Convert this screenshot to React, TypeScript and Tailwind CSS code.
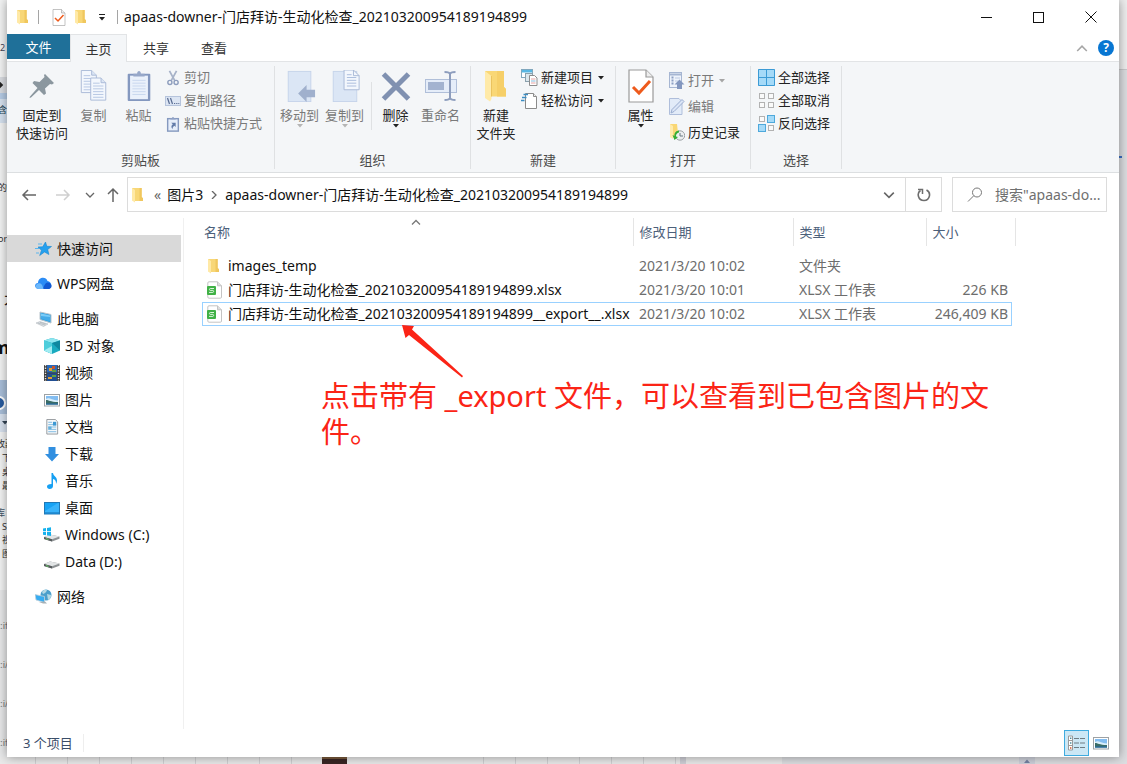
import React from "react";

type IconProps = { className?: string };

function Folder({ className = "h-4 w-4" }: IconProps) {
  return (
    <svg viewBox="0 0 16 16" className={className} aria-hidden="true">
      <path d="M2 1h9.500v10.500H13v2.500H4L2 13z" fill="#f8d777" />
      <path d="M9.500 1h2.200v9l1.300 1v3H9.500z" fill="#f0c75e" />
      <path d="M2 1l3 2v12.600L2 13.500z" fill="#ffe9a6" />
    </svg>
  );
}

function BigFolder() {
  return (
    <svg viewBox="0 0 32 32" className="h-8 w-8" aria-hidden="true">
      <path d="M5 1h19v16l2 2v7.500H10L5 28z" fill="#f9d775" />
      <path d="M17 1h7v16l2 2v7.500h-9z" fill="#f6cf68" />
      <path d="M5 1l6.500 5v23l-1.500 2.500L5 28z" fill="#ffeaa8" />
      <path d="M11.500 26.500V6" stroke="#e6bb52" strokeWidth="0.800" />
    </svg>
  );
}

function CheckedPage({ className = "h-4 w-4" }: IconProps) {
  return (
    <svg viewBox="0 0 26 34" className={className} aria-hidden="true">
      <path d="M1 1h17l7 7v25H1z" fill="#fff" stroke="#9a9a9a" strokeWidth="1.200" />
      <path d="M18 1v7h7" fill="#eee" stroke="#9a9a9a" strokeWidth="1.200" />
      <path d="M5 18l6 6 11-12" fill="none" stroke="#ee5a1c" strokeWidth="3" />
    </svg>
  );
}

function Pin() {
  return (
    <svg viewBox="0 0 32 32" className="h-8 w-8" aria-hidden="true">
      <path d="M19 4l9 9-2 1.500-2-.500-5 4.500 1 5-2 1.500-5-5-8 7.500-1.500.5.500-1.500L11.500 18l-5-5 1.500-2 5.500 1 5-5-.5-2z" fill="#8b979f" />
    </svg>
  );
}

function PageLines({ x, y }: { x: number; y: number }) {
  return (
    <g transform={`translate(${x} ${y})`}>
      <path d="M.5.500h11l5 5v18.500H.5z" fill="#f3f7fd" stroke="#a9b9d6" />
      <path d="M11.500.500v5h5" fill="#dbe5f4" stroke="#a9b9d6" />
      <path d="M3 6h7M3 9h11M3 12h11M3 15h11M3 18h11M3 21h11" stroke="#b4c5e2" />
    </g>
  );
}

function CopyPages() {
  return (
    <svg viewBox="0 0 32 34" className="h-8 w-8" aria-hidden="true">
      <PageLines x={2} y={0} />
      <PageLines x={12} y={8} />
    </svg>
  );
}

function Clipboard() {
  return (
    <svg viewBox="0 0 32 34" className="h-8 w-8" aria-hidden="true">
      <rect x="4" y="4" width="24" height="29" rx="1" fill="#8498bf" />
      <rect x="6.500" y="6" width="19" height="25" fill="#eaf1fb" />
      <path d="M10 7V4h4c0-4 4-4 4 0h4v3z" fill="#97a8c9" />
      <path d="M9 11h14M9 14h14M9 17h14M9 20h14M9 23h14M9 26h14" stroke="#c7d6ee" />
    </svg>
  );
}

function Scissors() {
  return (
    <svg viewBox="0 0 16 18" className="h-4 w-4" aria-hidden="true">
      <path d="M4 1l6 11M12 1L6 12" stroke="#a7b2c8" strokeWidth="2" fill="none" />
      <circle cx="4.500" cy="14" r="2.300" fill="none" stroke="#8d9dbd" strokeWidth="1.600" />
      <circle cx="11.500" cy="14" r="2.300" fill="none" stroke="#8d9dbd" strokeWidth="1.600" />
    </svg>
  );
}

function PathBox() {
  return (
    <svg viewBox="0 0 16 16" className="h-4 w-4" aria-hidden="true">
      <rect x="0.500" y="3.500" width="15" height="9" fill="#dce5f3" stroke="#b6c4dc" />
      <path d="M2.500 5l2 6M5.500 5l2 6" stroke="#596c92" strokeWidth="1.200" />
      <path d="M9 10.500h1.200M11.200 10.500h1.200M13.300 10.500h1" stroke="#596c92" />
    </svg>
  );
}

function ShortcutClipboard() {
  return (
    <svg viewBox="0 0 16 18" className="h-4 w-4" aria-hidden="true">
      <rect x="2" y="3" width="12" height="14" fill="#e6eefa" stroke="#8599bf" strokeWidth="1.600" />
      <path d="M5 4V2.500h2c0-2 2-2 2 0h2V4z" fill="#8fa1c5" />
      <path d="M6 7.500h5v5L9.500 11c-1.500 1-2 2-2 4-2-2.500-1.500-4.500.3-5.700z" fill="#637ca9" />
    </svg>
  );
}

function MoveTo() {
  return (
    <svg viewBox="0 0 32 34" className="h-8 w-8" aria-hidden="true">
      <rect x="3.500" y="1.500" width="24" height="32" fill="#dbe6f5" stroke="#c6d4ea" />
      <path d="M14 25l9-9v5h9v8h-9v5z" fill="#a0b0cd" />
    </svg>
  );
}

function CopyTo() {
  return (
    <svg viewBox="0 0 32 34" className="h-8 w-8" aria-hidden="true">
      <rect x="3.500" y="1.500" width="25" height="32" fill="#dbe6f5" stroke="#c6d4ea" />
      <g transform="translate(14 -1)">
        <path d="M1 1h10l6 6v15H1z" fill="#f3f7fd" stroke="#a9b9d6" />
        <path d="M11 1v6h6" fill="none" stroke="#a9b9d6" />
        <path d="M4 6h5M4 9h10M4 12h10M4 15h10M4 18h10" stroke="#a9bbdc" />
      </g>
    </svg>
  );
}

function Cross() {
  return (
    <svg viewBox="0 0 32 32" className="h-8 w-8" aria-hidden="true">
      <path d="M3.500 4l25 25M28.500 4l-25 25" stroke="#8091b1" strokeWidth="5" />
    </svg>
  );
}

function Rename() {
  return (
    <svg viewBox="0 0 32 32" className="h-8 w-8" aria-hidden="true">
      <rect x="0.500" y="9.500" width="31" height="13" fill="#e5edf9" stroke="#b0bfd9" />
      <rect x="3" y="12" width="16" height="8" fill="#a3b3d0" />
      <path d="M19.500 2c3 0 5 0 5.500 2 .5-2 2.500-2 5.500-2M25 3v26M19.500 30c3 0 5 0 5.500-2 .5 2 2.500 2 5.500 2" fill="none" stroke="#8d9dbd" strokeWidth="2" />
    </svg>
  );
}

function NewItem() {
  return (
    <svg viewBox="0 0 17 17" className="h-[17px] w-[17px]" aria-hidden="true">
      <rect x="0.500" y="0.500" width="11" height="8" fill="#fff" stroke="#80a7bd" />
      <rect x="1" y="1" width="10" height="2.500" fill="#58b7e3" />
      <rect x="4.500" y="4.500" width="7" height="8" fill="#dbe7ed" stroke="#8ba1ad" />
      <path d="M8.500 6.500h5l2.500 2.500v7.500H8.500z" fill="#fff" stroke="#8d8d8d" />
      <path d="M10 10h4.500M10 14h4.500" stroke="#e7a2a2" />
      <path d="M10 12h4.500" stroke="#82bce0" />
    </svg>
  );
}

function EasyAccess() {
  return (
    <svg viewBox="0 0 17 17" className="h-[17px] w-[17px]" aria-hidden="true">
      <path d="M4.500 1.500h8l3 3v12h-11z" fill="#fff" stroke="#8b8b8b" />
      <path d="M12.500 1.500v3h3" fill="#eee" stroke="#8b8b8b" />
      <path d="M2.500 2.500H7M1 5.500h4.500M0 8.500h3.500" stroke="#3c8ec4" strokeWidth="1.500" />
    </svg>
  );
}

function OpenIcon() {
  return (
    <svg viewBox="0 0 16 17" className="h-[17px] w-4" aria-hidden="true">
      <rect x="0.500" y="0.500" width="12" height="15" fill="#eef3fb" stroke="#a6b6d2" />
      <path d="M1 2.500h11" stroke="#a6b6d2" strokeWidth="2" />
      <path d="M2.500 5.500h2M2.500 8.500h2M2.500 11.500h2" stroke="#8c9fc3" strokeWidth="2" />
      <path d="M6 6h5M6 9h3" stroke="#bccae2" />
      <path d="M10.500 7.500l5 5H13V17H8v-4.500H5.500z" fill="#8397bf" />
    </svg>
  );
}

function EditIcon() {
  return (
    <svg viewBox="0 0 16 17" className="h-[17px] w-4" aria-hidden="true">
      <path d="M.5.500h9.500l3 3v13H.5z" fill="#e2ebf8" stroke="#afbedb" />
      <path d="M2 15l1-3.500L13 1.500l2 2L5 13.500z" fill="#dbe5f6" stroke="#9aadd0" />
    </svg>
  );
}

function HistoryIcon() {
  return (
    <svg viewBox="0 0 16 17" className="h-[17px] w-4" aria-hidden="true">
      <path d="M1 0h7l1 9-5 5-3-1z" fill="#f9d775" />
      <path d="M1 0l3 2v13l-3-2z" fill="#ffebac" />
      <circle cx="11" cy="11.500" r="4.700" fill="#eceff0" stroke="#9ba1a4" />
      <path d="M11 9v3h3" fill="none" stroke="#6a7a84" />
      <path d="M10 6.500c-3 .3-5 2.500-4.500 5.500L3.500 11l2 5 3.500-3-2-.5c-.2-2 1-3.500 3-4z" fill="#35ae35" />
    </svg>
  );
}

const squares: [number, number][] = [[0, 0], [9, 0], [0, 9], [9, 9]];

function SelectGrid({ filled }: { filled: number[] }) {
  return (
    <svg viewBox="0 0 17 17" className="h-[17px] w-[17px]" aria-hidden="true">
      {squares.map(([x, y], i) =>
        filled.includes(i) ? (
          <rect key={i} x={x + 0.5} y={y + 0.5} width="7" height="7" fill="#a5daf8" stroke="#4ea9dc" />
        ) : (
          <rect key={i} x={x + 1.5} y={y + 1.5} width="5" height="5" fill="#fafafa" stroke="#b2b2b2" />
        ),
      )}
    </svg>
  );
}

function SelectAll() {
  return (
    <svg viewBox="0 0 17 17" className="h-[17px] w-[17px]" aria-hidden="true">
      <rect width="17" height="17" fill="#a5daf8" />
      <path d="M.5.500h16v16H.5zM8.500 0v17M0 8.500h17" fill="none" stroke="#3c9bd5" />
    </svg>
  );
}

function Sheet() {
  return (
    <svg viewBox="0 0 16 18" className="h-[18px] w-4" aria-hidden="true">
      <path d="M3 .8h8.500l4 4V16c0 .8-.4 1.200-1.200 1.200H3c-.8 0-1.200-.4-1.200-1.200V2C1.800 1.200 2.200.8 3 .8z" fill="#fff" stroke="#c4c4c4" />
      <path d="M11.500.8v4h4" fill="#ddd" stroke="#c4c4c4" />
      <rect x="1" y="5" width="9" height="9" rx="1" fill="#40b146" />
      <path d="M8 7.500H4.200c-1 0-1 1.900 0 1.900h2.700c1 0 1 2 0 2H3" fill="none" stroke="#dbf5dc" />
    </svg>
  );
}

function StarIcon() {
  return (
    <svg viewBox="0 0 17 16" className="h-4 w-[17px]" aria-hidden="true">
      <path d="M10.500 1l1.300 4.300 4.700.2-3.800 3 1.200 5L9.500 11l-4.800 3.500 1.800-5.300L3 6l4.700-.2z" fill="#25a0ee" stroke="#1686d1" strokeWidth="0.600" />
      <path d="M3 3h4M0 7.500h4M1 12h3" stroke="#5ab6ee" />
    </svg>
  );
}

function CloudIcon() {
  return (
    <svg viewBox="0 0 17 16" className="h-4 w-[17px]" aria-hidden="true">
      <path d="M4 13c-5 0-5-6-1-6 0-6 8-7 9.500-2 4 0 5.500 7 1 8z" fill="#2b8cf5" />
      <path d="M8 13c1-3 2-6 4.500-6.500C16.500 6 18.500 12 14 13z" fill="#1259d2" />
      <path d="M2 8c3-2 5 0 5.500 2l1 3H4C.5 13 0 9.500 2 8z" fill="#6db8fb" />
    </svg>
  );
}

function PcIcon() {
  return (
    <svg viewBox="0 0 17 16" className="h-4 w-[17px]" aria-hidden="true">
      <path d="M5 1l11 2.500v8.500L5 8.500z" fill="#2f9fe0" stroke="#b8c4cc" />
      <path d="M6 2.500l9 2v6L6 7.500z" fill="#44abe8" />
      <path d="M6 2.500l9 2v1.500L6 5z" fill="#7accf8" />
      <path d="M1 12l4-1.500 8 2.500-4.500 2.500z" fill="#dbe0e4" stroke="#aab1b6" strokeWidth="0.500" />
      <path d="M3 12l7 2M5 11.300l6 1.800" stroke="#9ba4aa" strokeWidth="0.500" />
    </svg>
  );
}

function CubeIcon() {
  return (
    <svg viewBox="0 0 16 16" className="h-4 w-4" aria-hidden="true">
      <path d="M8 0l8 2.500v10L8 16 0 12.500v-10z" fill="#19aabf" />
      <path d="M8 0l8 2.500L8 5 0 2.500z" fill="#8ee5ef" />
      <path d="M0 2.500L8 5v11l-8-3.500z" fill="#4dcddb" />
      <path d="M0 12.500L8 8v8z" fill="#a1ecf2" />
      <path d="M8 5l8-2.500v10z" fill="#0f879f" />
    </svg>
  );
}

function FilmIcon() {
  return (
    <svg viewBox="0 0 16 16" className="h-4 w-4" aria-hidden="true">
      <rect width="16" height="16" fill="#3c3c3c" />
      <rect x="3" y="0" width="10" height="7.500" fill="#2969b8" />
      <rect x="3" y="8.500" width="10" height="7.500" fill="#214f93" />
      <path d="M5 3h3v3H5zM4 12h4v2H4z" fill="#e59d2f" />
      <path d="M8 1h3v3H8z" fill="#c9542a" />
      <path d="M8 5h4v2H8zM8 10h4v2H8z" fill="#5fa240" />
      <path d="M1.500 0v16M14.500 0v16" stroke="#e5e5e5" strokeWidth="1.400" strokeDasharray="1.300 1.300" />
    </svg>
  );
}

function PhotoIcon() {
  return (
    <svg viewBox="0 0 16 16" className="h-4 w-4" aria-hidden="true">
      <rect x="0.500" y="2.500" width="15" height="11.500" fill="#fff" stroke="#9da2a5" />
      <rect x="2" y="4" width="12" height="8.500" fill="#83bdf1" />
      <path d="M2 7c3-2 5 1 12 1.500v2H2z" fill="#d9eefa" />
      <path d="M2 8c3 0 4 2 12 2v2.500H2z" fill="#3a6c66" />
      <path d="M2 11.500h12v1H2z" fill="#2769a9" />
    </svg>
  );
}

function DocIcon() {
  return (
    <svg viewBox="0 0 16 17" className="h-4 w-4" aria-hidden="true">
      <path d="M2.500.500h9l2.500 2.500v13H2.500z" fill="#f5f8fa" stroke="#93989c" />
      <path d="M4 3.500h4M4 6h8.500M4 8.500h8.500M4 11h8.500M4 13.500h8.500" stroke="#7ab9e1" />
      <rect x="9" y="3" width="3.500" height="4" fill="#3c98d3" />
      <rect x="4" y="8" width="3.500" height="3" fill="#64afdc" />
    </svg>
  );
}

function DownIcon() {
  return (
    <svg viewBox="0 0 16 16" className="h-4 w-4" aria-hidden="true">
      <path d="M4.500 1h7v7H15l-7 7.500L1 8h3.500z" fill="#318fe0" />
    </svg>
  );
}

function NoteIcon() {
  return (
    <svg viewBox="0 0 16 16" className="h-4 w-4" aria-hidden="true">
      <path d="M7.500 0H9c.3 3 4 3.500 4 7.500 0 1.500-.5 2.500-1 3.500.3-3-1-4.500-3-5v7c0 1.700-1.500 3-3.300 3S3 15 3 13.500C3 12 4.500 11 7.500 11z" fill="#16a0f3" />
    </svg>
  );
}

function DesktopIcon() {
  return (
    <svg viewBox="0 0 16 16" className="h-4 w-4" aria-hidden="true">
      <rect x="0.500" y="2.500" width="15" height="11.500" fill="#17a3f5" stroke="#2078b5" />
      <path d="M1 11L14 3h1v10.500H1z" fill="#39b3fa" />
      <path d="M1 13h14" stroke="#126fb5" />
    </svg>
  );
}

function DriveIcon({ windows = false }: { windows?: boolean }) {
  return (
    <svg viewBox="0 0 17 16" className="h-4 w-[17px]" aria-hidden="true">
      <path d="M1 10L7 7.500l9.500 2v2.200L9 14.500l-8-2.500z" fill="#8d9193" />
      <path d="M1 10l6-2.500 9.500 2L9 12.200z" fill="#e2e5e6" />
      <path d="M1 10l8 2.200v2.300L1 12z" fill="#565b5d" />
      <path d="M3 11.600l2.500.8" stroke="#63cf63" />
      {windows && <path d="M0 1.500l3-.5v3.200H0zM4 .900L8 .300v3.900H4zM0 5h3v3.200l-3-.5zM4 5h4v3.900l-4-.6z" fill="#14b1ed" />}
    </svg>
  );
}

function NetworkIcon() {
  return (
    <svg viewBox="0 0 17 16" className="h-4 w-[17px]" aria-hidden="true">
      <circle cx="11" cy="6" r="5.500" fill="#4b9fcb" />
      <path d="M7 3c2-3 4-2 5-2-1 3-2 3-4 4zM12 5l4 1c0 3-1 4-3 5z" fill="#b5d9e4" />
      <path d="M0 5.500l9.500 2v6L1 11z" fill="#37acf1" stroke="#c7d3da" strokeWidth="0.800" />
      <path d="M4 13l4 1.500h4l-2-2" fill="#a6b0b5" />
    </svg>
  );
}

function Chevron({ dir, className = "h-2 w-2.5 text-[#666]" }: { dir: "up" | "down" | "right"; className?: string }) {
  const d = { up: "M1 6.500l4-4 4 4", down: "M1 2l4 4 4-4", right: "M3 0l4 4-4 4" }[dir];
  return (
    <svg viewBox="0 0 10 8" className={className} aria-hidden="true">
      <path d={d} fill="none" stroke="currentColor" strokeWidth="1.300" />
    </svg>
  );
}

function Caret({ className = "text-[#222]" }: IconProps) {
  return (
    <svg viewBox="0 0 6 4" className={`h-1 w-1.5 shrink-0 ${className}`} aria-hidden="true">
      <path d="M0 0h6L3 3.500z" fill="currentColor" />
    </svg>
  );
}

function Arrow({ dir, className }: { dir: "left" | "right" | "up"; className: string }) {
  const d = {
    left: "M15 8H2M7 3L2 8l5 5",
    right: "M1 8h13M9 3l5 5-5 5",
    up: "M8 15V2M3 7l5-5 5 5",
  }[dir];
  return (
    <svg viewBox="0 0 16 16" className={`h-4 w-4 ${className}`} aria-hidden="true">
      <path d={d} fill="none" stroke="currentColor" strokeWidth="1.500" />
    </svg>
  );
}

type BigProps = { icon: React.ReactNode; lines: string[]; off?: boolean; caret?: boolean; className?: string };

function BigButton({ icon, lines, off, caret, className = "w-[45px]" }: BigProps) {
  return (
    <button type="button" className={`flex shrink-0 flex-col items-center ${off ? "text-[#7a7a7a]" : "text-[#222]"} ${className}`}>
      <span className="mb-1 mt-1 flex h-8 items-center">{icon}</span>
      {lines.map((l) => (
        <span key={l} className="whitespace-nowrap leading-[18px]">{l}</span>
      ))}
      {caret && <Caret className={off ? "text-[#b5b5b5]" : "text-[#222]"} />}
    </button>
  );
}

type SmallProps = { icon: React.ReactNode; label: string; off?: boolean; caret?: boolean };

function SmallButton({ icon, label, off, caret }: SmallProps) {
  return (
    <button type="button" className={`flex items-center gap-[3px] whitespace-nowrap leading-[23px] ${off ? "text-[#7a7a7a]" : "text-[#222]"}`}>
      {icon}
      <span>{label}</span>
      {caret && <Caret className={off ? "ml-0.5 text-[#a5a5a5]" : "ml-0.5 text-[#222]"} />}
    </button>
  );
}

function Group({ label, className, children }: { label: string; className: string; children: React.ReactNode }) {
  return (
    <section aria-label={label} className={`mb-[3px] mt-1 flex shrink-0 flex-col justify-between border-r border-[#dfe1e3] ${className}`}>
      <div className="flex items-start">{children}</div>
      <p className="text-center leading-[18px] text-[#4b4b4b]">{label}</p>
    </section>
  );
}

function TitleBar() {
  return (
    <header className="flex h-[34px] items-center pl-2 text-[#111]">
      <Folder />
      <span className="ml-[7px] mr-3 h-3.5 w-px bg-[#a5a5a5]" />
      <button type="button" aria-label="属性"><CheckedPage className="h-[17px] w-4" /></button>
      <button type="button" aria-label="新建文件夹" className="ml-1.5"><Folder /></button>
      <button type="button" aria-label="自定义快速访问工具栏" className="ml-2.5 flex flex-col items-center gap-0.5">
        <span className="h-px w-1.5 bg-[#222]" />
        <Caret />
      </button>
      <span className="ml-3 mr-1.5 h-3.5 w-px bg-[#a5a5a5]" />
      <h1 className="flex-1 truncate text-sm leading-[18px]">apaas-downer-门店拜访-生动化检查_202103200954189194899</h1>
      <button type="button" aria-label="最小化" className="flex w-[52px] justify-center"><span className="h-px w-[11px] bg-[#111]" /></button>
      <button type="button" aria-label="最大化" className="flex w-[52px] justify-center"><span className="h-[11px] w-[11px] border border-[#111]" /></button>
      <button type="button" aria-label="关闭" className="mr-0.5 flex w-[53px] justify-center">
        <svg viewBox="0 0 12 12" className="h-3 w-3" aria-hidden="true"><path d="M.5.500l11 11M11.500.500l-11 11" stroke="#111" /></svg>
      </button>
    </header>
  );
}

function Tabs() {
  return (
    <nav className="flex h-7 items-stretch border-b border-[#e2e4e6] text-[#333]">
      <button type="button" className="mb-0.5 w-[63px] bg-[#1f7099] text-white">文件</button>
      <button type="button" className="-mb-px w-[57px] border border-b-0 border-[#e2e4e6] bg-[#f4f6f8]">主页</button>
      <button type="button" className="w-[58px]">共享</button>
      <button type="button" className="w-[58px]">查看</button>
      <span className="flex-1" />
      <button type="button" aria-label="折叠功能区" className="mr-2.5"><Chevron dir="up" className="h-2.5 w-3 text-[#a6a6a6]" /></button>
      <button type="button" aria-label="帮助" className="mr-[5px] h-4 w-4 self-center rounded-full bg-[#0876d2] text-xs font-bold leading-4 text-white">?</button>
    </nav>
  );
}

function Ribbon() {
  return (
    <div className="flex h-[111px] border-b border-[#dcdfe1] bg-[#f4f6f8]">
      <Group label="剪贴板" className="w-[268px]">
        <BigButton icon={<Pin />} lines={["固定到", "快速访问"]} className="ml-2 w-[54px]" />
        <BigButton icon={<CopyPages />} lines={["复制"]} off className="ml-0.5 w-[45px]" />
        <BigButton icon={<Clipboard />} lines={["粘贴"]} off />
        <div className="ml-1 flex flex-col items-start">
          <SmallButton icon={<Scissors />} label="剪切" off />
          <SmallButton icon={<PathBox />} label="复制路径" off />
          <SmallButton icon={<ShortcutClipboard />} label="粘贴快捷方式" off />
        </div>
      </Group>
      <Group label="组织" className="w-[196px]">
        <BigButton icon={<MoveTo />} lines={["移动到"]} off caret className="ml-0.5 w-[45px]" />
        <BigButton icon={<CopyTo />} lines={["复制到"]} off caret />
        <span className="ml-1 mt-4 h-12 w-px bg-[#dfe1e3]" />
        <BigButton icon={<Cross />} lines={["删除"]} caret className="w-[47px]" />
        <BigButton icon={<Rename />} lines={["重命名"]} off className="w-[43px]" />
      </Group>
      <Group label="新建" className="w-[145px]">
        <BigButton icon={<BigFolder />} lines={["新建", "文件夹"]} className="w-[50px]" />
        <div className="flex flex-col items-start">
          <SmallButton icon={<NewItem />} label="新建项目" caret />
          <SmallButton icon={<EasyAccess />} label="轻松访问" caret />
        </div>
      </Group>
      <Group label="打开" className="w-[135px]">
        <BigButton icon={<CheckedPage className="h-[34px] w-[26px]" />} lines={["属性"]} caret className="ml-0.5 w-[45px]" />
        <div className="ml-1.5 mt-[3px] flex flex-col items-start gap-[3px]">
          <SmallButton icon={<OpenIcon />} label="打开" off caret />
          <SmallButton icon={<EditIcon />} label="编辑" off />
          <SmallButton icon={<HistoryIcon />} label="历史记录" />
        </div>
      </Group>
      <Group label="选择" className="w-[91px]">
        <div className="ml-[7px] flex flex-col items-start">
          <SmallButton icon={<SelectAll />} label="全部选择" />
          <SmallButton icon={<SelectGrid filled={[]} />} label="全部取消" />
          <SmallButton icon={<SelectGrid filled={[1, 2]} />} label="反向选择" />
        </div>
      </Group>
    </div>
  );
}

function AddressBar() {
  return (
    <div className="flex h-[45px] items-center pb-0.5 pl-3.5 pr-3 text-sm leading-[18px]">
      <button type="button" aria-label="后退"><Arrow dir="left" className="text-[#666]" /></button>
      <button type="button" aria-label="前进" className="ml-[18px]"><Arrow dir="right" className="text-[#cfcfcf]" /></button>
      <button type="button" aria-label="最近浏览的位置" className="ml-3.5"><Chevron dir="down" /></button>
      <button type="button" aria-label="上移" className="ml-2.5"><Arrow dir="up" className="text-[#666]" /></button>
      <div className="ml-1.5 flex h-[35px] min-w-0 flex-1 items-center border border-[#dcdcdc] text-[#111]">
        <span className="ml-0.5"><Folder /></span>
        <span className="ml-2 text-[#666]">«</span>
        <button type="button" className="ml-1.5 whitespace-nowrap">图片3</button>
        <Chevron dir="right" className="mx-1.5 h-2 w-2.5 text-[#666]" />
        <button type="button" className="min-w-0 truncate">apaas-downer-门店拜访-生动化检查_202103200954189194899</button>
        <span className="flex-1" />
        <button type="button" aria-label="展开地址" className="mr-2.5"><Chevron dir="down" className="h-2.5 w-3 text-[#666]" /></button>
        <button type="button" aria-label="刷新" className="flex h-full w-9 items-center justify-center border-l border-[#dcdcdc]">
          <svg viewBox="0 0 14 14" className="h-3.5 w-3.5" aria-hidden="true">
            <path d="M9.500 2c5 2.500 3.500 10.500-2.500 10.500S-.5 5 3.500 2.500" fill="none" stroke="#6d6d6d" strokeWidth="1.600" />
            <path d="M1 1.500h4.500V6" fill="none" stroke="#6d6d6d" strokeWidth="1.500" />
          </svg>
        </button>
      </div>
      <label className="ml-2.5 flex h-[35px] w-[155px] items-center border border-[#dcdcdc] pl-3.5">
        <svg viewBox="0 0 16 16" className="h-4 w-4 shrink-0" aria-hidden="true">
          <circle cx="10" cy="5.500" r="4.500" fill="none" stroke="#777" />
          <path d="M6.800 8.700L1 14.500" stroke="#777" />
        </svg>
        <input aria-label="搜索" placeholder={'搜索"apaas-do...'} className="ml-3 w-full min-w-0 bg-transparent outline-none placeholder:text-[#6f6f6f]" />
      </label>
    </div>
  );
}

type NavItem = { icon: React.ReactNode; label: string; child?: boolean; active?: boolean };

const navGroups: NavItem[][] = [
  [{ icon: <StarIcon />, label: "快速访问", active: true }],
  [{ icon: <CloudIcon />, label: "WPS网盘" }],
  [
    { icon: <PcIcon />, label: "此电脑" },
    { icon: <CubeIcon />, label: "3D 对象", child: true },
    { icon: <FilmIcon />, label: "视频", child: true },
    { icon: <PhotoIcon />, label: "图片", child: true },
    { icon: <DocIcon />, label: "文档", child: true },
    { icon: <DownIcon />, label: "下载", child: true },
    { icon: <NoteIcon />, label: "音乐", child: true },
    { icon: <DesktopIcon />, label: "桌面", child: true },
    { icon: <DriveIcon windows />, label: "Windows (C:)", child: true },
    { icon: <DriveIcon />, label: "Data (D:)", child: true },
  ],
  [{ icon: <NetworkIcon />, label: "网络" }],
];

function Sidebar() {
  return (
    <nav aria-label="导航窗格" className="flex w-[177px] shrink-0 flex-col gap-2 border-r border-[#f0f0f0] pr-0.5 pt-[17px] text-sm leading-[18px] text-[#111]">
      {navGroups.map((group, i) => (
        <ul key={i}>
          {group.map((item) => (
            <li key={item.label}>
              <a href="#" className={`flex h-[27px] items-center gap-[5px] ${item.child ? "pl-9" : "pl-7"} ${item.active ? "bg-[#d9d9d9]" : ""}`}>
                <span className="flex w-[17px] justify-center">{item.icon}</span>
                {item.label}
              </a>
            </li>
          ))}
        </ul>
      ))}
    </nav>
  );
}

const files = [
  { icon: <Folder />, name: "images_temp", date: "2021/3/20 10:02", type: "文件夹", size: "" },
  { icon: <Sheet />, name: "门店拜访-生动化检查_202103200954189194899.xlsx", date: "2021/3/20 10:01", type: "XLSX 工作表", size: "226 KB" },
  { icon: <Sheet />, name: "门店拜访-生动化检查_202103200954189194899__export__.xlsx", date: "2021/3/20 10:02", type: "XLSX 工作表", size: "246,409 KB", focused: true },
];

function FileTable() {
  return (
    <table className="ml-[18px] w-[810px] table-fixed border-collapse text-left text-sm leading-[18px]">
      <thead className="text-[13px] text-[#4c607a]">
        <tr className="h-7">
          <th scope="col" className="relative w-[431px] border-r border-[#e5e5e5] pl-0.5 font-normal">
            名称
            <span className="absolute left-[209px] top-0"><Chevron dir="up" className="h-2 w-2.5 text-[#777]" /></span>
          </th>
          <th scope="col" className="w-[160px] border-r border-[#e5e5e5] pl-1.5 font-normal">修改日期</th>
          <th scope="col" className="w-[133px] border-r border-[#e5e5e5] pl-1.5 font-normal">类型</th>
          <th scope="col" className="relative pl-1.5 font-normal">
            大小
            <span className="absolute -right-1 top-0 h-full w-px bg-[#e5e5e5]" />
          </th>
        </tr>
        <tr aria-hidden="true" className="h-2"><td colSpan={4} /></tr>
      </thead>
      <tbody className="text-[#6d6d6d]">
        {files.map((f) => (
          <tr key={f.name} className={`h-6 ${f.focused ? "outline-1 -outline-offset-1 outline-[#99d1ff]" : ""}`}>
            <td className="text-[#111]">
              <span className="flex items-center gap-1.5 whitespace-nowrap pl-1">
                <span className="flex w-4 justify-center">{f.icon}</span>
                {f.name}
              </span>
            </td>
            <td className="pl-1.5">{f.date}</td>
            <td className="pl-1.5">{f.type}</td>
            <td className="whitespace-nowrap pr-1 text-right">{f.size}</td>
          </tr>
        ))}
      </tbody>
    </table>
  );
}

function Annotation() {
  return (
    <div className="absolute left-[137px] top-[106px] text-[#fb2416]">
      <svg viewBox="0 0 62 54" className="ml-20 h-[54px] w-[62px]" aria-hidden="true">
        <path d="M1 1L13 2l-2 3.500L62 52l-1 1.500L8 11l-3.500 3z" fill="currentColor" />
      </svg>
      <p className="w-[670px] text-[29px] leading-9">点击带有 _export 文件，可以查看到已包含图片的文件。</p>
    </div>
  );
}

function StatusBar() {
  return (
    <footer className="flex h-7 items-center pl-4 pr-2.5 text-[#3a4d68]">
      <span className="border-r border-[#eee] pr-2.5">3 个项目</span>
      <span className="flex-1" />
      <button type="button" aria-label="详细信息" className="flex h-[26px] w-[25px] items-center justify-center border border-[#3fabdf] bg-[#cbe7f5]">
        <svg viewBox="0 0 17 16" className="h-4 w-[17px]" aria-hidden="true">
          <path d="M.5 1h4v14h-4zM.5 5.500h4M.5 10.500h4" fill="#fff" stroke="#9a9a9a" />
          <path d="M2 3.300h1.400M2 8h1.400" stroke="#4c8b9b" strokeWidth="1.400" />
          <path d="M2 13h1.400" stroke="#d2542c" strokeWidth="1.400" />
          <path d="M6 3.500h11M6 8h11M6 12.500h11" stroke="#6f7d84" strokeDasharray="5 1" />
        </svg>
      </button>
      <button type="button" aria-label="大缩略图" className="ml-1"><PhotoIcon /></button>
    </footer>
  );
}

const behindLeft = [
  { top: "top-[42px]", text: "2", cls: "left-0 text-[#445]" },
  { top: "top-[104px]", text: "含", cls: "-left-0.5 text-[#245]" },
  { top: "top-[182px]", text: "的", cls: "-left-0.5 text-[#333]" },
  { top: "top-[233px]", text: "or", cls: "-left-0.5 text-[#333]" },
  { top: "top-[438px]", text: "收藏", cls: "-left-1 text-[#333]" },
  { top: "top-[452px]", text: "下", cls: "left-0.5 text-[#333]" },
  { top: "top-[466px]", text: "桌", cls: "left-0.5 text-[#333]" },
  { top: "top-[480px]", text: "最", cls: "left-0.5 text-[#333]" },
  { top: "top-[507px]", text: "库", cls: "-left-1 text-[#456]" },
  { top: "top-[521px]", text: "S", cls: "left-0.5 text-[#333]" },
  { top: "top-[534px]", text: "视", cls: "left-0.5 text-[#333]" },
  { top: "top-[548px]", text: "图", cls: "left-0.5 text-[#333]" },
  { top: "top-[620px]", text: "c:if", cls: "-left-1 text-[#777]" },
  { top: "top-[659px]", text: "c:i/", cls: "-left-1 text-[#777]" },
  { top: "top-[698px]", text: "c:i/", cls: "-left-1 text-[#777]" },
  { top: "top-[737px]", text: "c:if", cls: "-left-1 text-[#777]" },
];

function Backdrop() {
  return (
    <div aria-hidden="true" className="absolute inset-0 overflow-hidden bg-[#dcdde0] text-[9px] leading-3">
      <div className="absolute inset-y-0 left-0 w-2 overflow-hidden bg-[#f3f4f4]">
        <span className="absolute left-0 top-[77px] h-4 w-2 bg-[#d9dce1]" />
        <span className="absolute left-0 top-[93px] h-1.5 w-2 bg-[#b5cbe5]" />
        <span className="absolute left-0 top-[99px] h-6 w-2 bg-[#d6e2f0]" />
        <span className="absolute -left-1 top-[82px] h-1.5 w-1.5 rotate-45 bg-[#222]" />
        <span className="absolute left-0 top-[380px] h-[34px] w-2 bg-[#a9bfda]" />
        <span className="absolute -left-2 top-[396px] h-3.5 w-3.5 rounded-full border-2 border-white bg-[#285b9f]" />
        <span className="absolute left-0 top-[414px] h-[18px] w-2 bg-[#d8e2ef]" />
        <span className="absolute left-0.5 top-[421px]"><Caret className="text-[#345]" /></span>
        <span className="absolute left-0 top-[590px] h-44 w-2 bg-[#e8e9ea]" />
        <span className="absolute left-1 top-[292px] text-base leading-4 text-[#222]">才</span>
        <span className="absolute -left-2 top-[337px] text-lg font-bold leading-5 text-[#111]">m</span>
        {behindLeft.map((b) => (
          <span key={b.top} className={`absolute whitespace-nowrap ${b.top} ${b.cls}`}>{b.text}</span>
        ))}
      </div>
      <div className="absolute right-0 top-0 h-[70px] w-2 border-b border-[#c8c9cb] bg-[#eeeeee]" />
      <span className="absolute right-[5px] top-[156px] h-0.5 w-[3px] bg-[#3b6fc5]" />
      <div className="absolute inset-x-0 bottom-0 flex h-[7px] bg-[#e9e9e9] pl-1">
        {Array.from({ length: 21 }, (_, i) => (
          <span key={i} className={`h-full w-8 shrink-0 ${i < 9 || i > 13 ? "border-r border-[#d0d0d2]" : ""}`}>
            {i === 10 && <span className="-ml-0.5 block h-full w-[25px] border-t-2 border-[#7a5a3c] bg-[#3a2524]" />}
          </span>
        ))}
        <span className="ml-1 h-full w-1.5 bg-[#cfcfd6]" />
        <span className="h-full w-24" />
        <span className="flex h-full flex-1 justify-end bg-[#dcdde0]">
          <span className="mr-[92px] flex h-full w-4 items-center justify-center bg-[#cdd0da]">
            <Caret className="rotate-180 text-[#7382a3]" />
          </span>
        </span>
      </div>
    </div>
  );
}

export default function App() {
  return (
    <div className="relative flex min-h-screen overflow-hidden pb-[7px] pl-[7px] pr-2 font-['Noto_Sans','Noto_Sans_CJK_SC',sans-serif] text-[13px] leading-[18px]">
      <Backdrop />
      <main className="relative flex min-w-0 flex-1 flex-col bg-white shadow-[0_0_10px_rgba(0,0,0,0.4)]">
        <TitleBar />
        <Tabs />
        <Ribbon />
        <AddressBar />
        <div className="flex flex-1">
          <Sidebar />
          <div className="relative min-w-0 flex-1">
            <FileTable />
            <Annotation />
          </div>
        </div>
        <StatusBar />
      </main>
    </div>
  );
}
